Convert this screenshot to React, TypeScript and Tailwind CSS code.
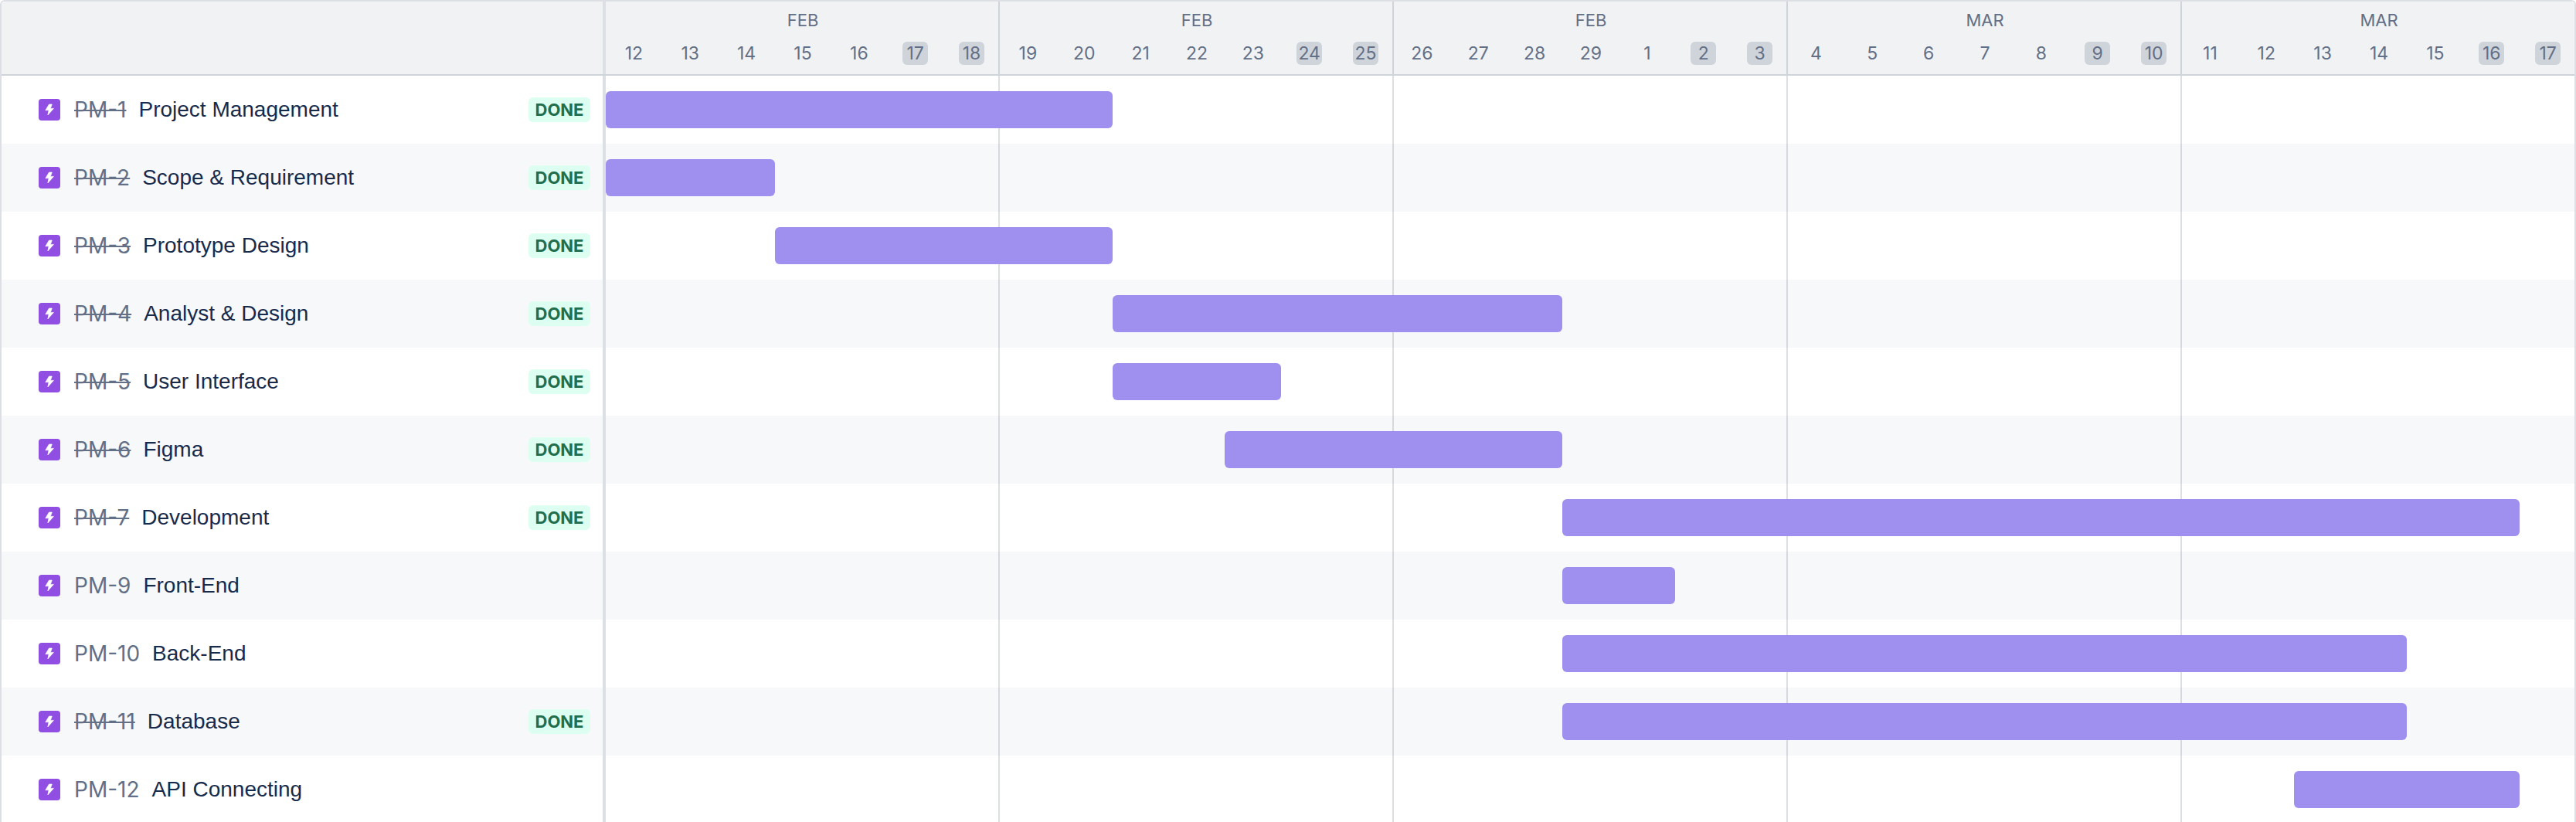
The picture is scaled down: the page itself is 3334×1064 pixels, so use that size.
const months = [
  { name: "FEB", days: [12, 13, 14, 15, 16, 17, 18] },
  { name: "FEB", days: [19, 20, 21, 22, 23, 24, 25] },
  { name: "FEB", days: [26, 27, 28, 29, 1, 2, 3] },
  { name: "MAR", days: [4, 5, 6, 7, 8, 9, 10] },
  { name: "MAR", days: [11, 12, 13, 14, 15, 16, 17] },
];

const tasks = [
  { key: "PM-1", title: "Project Management", done: true, from: 0, to: 9 },
  { key: "PM-2", title: "Scope & Requirement", done: true, from: 0, to: 3 },
  { key: "PM-3", title: "Prototype Design", done: true, from: 3, to: 9 },
  { key: "PM-4", title: "Analyst & Design", done: true, from: 9, to: 17 },
  { key: "PM-5", title: "User Interface", done: true, from: 9, to: 12 },
  { key: "PM-6", title: "Figma", done: true, from: 11, to: 17 },
  { key: "PM-7", title: "Development", done: true, from: 17, to: 34 },
  { key: "PM-9", title: "Front-End", done: false, from: 17, to: 19 },
  { key: "PM-10", title: "Back-End", done: false, from: 17, to: 32 },
  { key: "PM-11", title: "Database", done: true, from: 17, to: 32 },
  { key: "PM-12", title: "API Connecting", done: false, from: 30, to: 34 },
];

function EpicIcon() {
  return (
    <span className="flex h-7 w-7 shrink-0 items-center justify-center rounded-[4px] bg-[#904EE2]">
      <svg width="28" height="28" viewBox="0 0 28 28">
        <path d="M13.5 7h3.8l-1.9 5.4h4.1L11.8 21l1.3-6.2H8.8z" fill="#fff" stroke="#fff" strokeWidth="0.6" strokeLinejoin="round" />
      </svg>
    </span>
  );
}

export default function App() {
  return (
    <div className="h-[1064px] overflow-hidden rounded-t-[6px] border-2 border-b-0 border-[#DCDFE4] bg-white font-['Inter',sans-serif]">
      <div className="flex h-[96px] border-b-2 border-[#CFD4DB] bg-[#F1F2F4]">
        <div className="w-[782px] shrink-0 border-r-4 border-[#DCDFE4]" />
        <div className="grid grid-cols-[repeat(5,510px)]">
          {months.map((m, i) => (
            <div key={i} className="flex flex-col border-r-2 border-[#CFD4DB]">
              <div className="mt-[9px] h-[30px] pl-[2px] text-center text-[22px] leading-[30px] text-[#626F86]">{m.name}</div>
              <div className="-mr-[2px] mt-[13px] grid grid-cols-7">
                {m.days.map((d, j) => (
                  <div key={j} className="flex justify-center">
                    <span
                      className={
                        j >= 5
                          ? "flex h-[30px] w-[33px] items-center justify-center rounded-[6px] bg-[#CFD4DB] text-[23px] text-[#626F86]"
                          : "flex h-[30px] w-[33px] items-center justify-center text-[23px] text-[#626F86]"
                      }
                    >
                      {d}
                    </span>
                  </div>
                ))}
              </div>
            </div>
          ))}
        </div>
      </div>

      <div className="relative">
        <div className="pointer-events-none absolute inset-y-0 left-[782px] z-[1] grid grid-cols-[repeat(5,510px)]">
          {months.map((_, i) => (
            <div key={i} className="border-r-2 border-[#091E4224]" />
          ))}
        </div>
        {tasks.map((t, i) => (
          <div key={t.key} className={i % 2 === 1 ? "flex h-[88px] bg-[#F7F8F9]" : "flex h-[88px] bg-white"}>
            <div className="flex w-[782px] shrink-0 items-center border-r-4 border-[#DCDFE4] pl-[48px] pr-[16px]">
              <EpicIcon />
              <span className={t.done ? "ml-[18px] text-[28px] text-[#626F86] line-through" : "ml-[18px] text-[28px] text-[#626F86]"}>
                {t.key}
              </span>
              <span className="ml-[16px] font-['Liberation_Sans',sans-serif] text-[28px] text-[#172B4D]">{t.title}</span>
              {t.done && (
                <span className="ml-auto flex h-[32px] w-[80px] items-center justify-center rounded-[6px] bg-[#DCFFF1] text-[22px] font-bold text-[#216E4E]">
                  DONE
                </span>
              )}
            </div>
            <div className="grid grid-cols-[repeat(35,72.857px)] items-center">
              <div
                className="relative z-[2] h-[48px] rounded-[6px] bg-[#9F8FEF]"
                style={{ gridColumnStart: t.from + 1, gridColumnEnd: t.to + 1 }}
              />
            </div>
          </div>
        ))}
      </div>
    </div>
  );
}
